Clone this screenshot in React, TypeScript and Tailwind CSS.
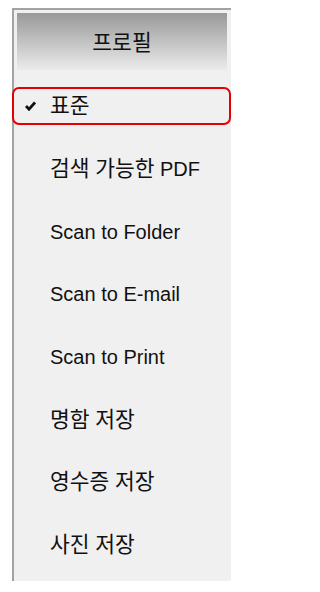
const items = [
  "검색 가능한 PDF",
  "Scan to Folder",
  "Scan to E-mail",
  "Scan to Print",
  "명함 저장",
  "영수증 저장",
  "사진 저장",
];

const font = { fontFamily: '"Liberation Sans", "Noto Sans CJK KR", sans-serif' };

// hangul runs come out a touch small next to the latin, so bump them
function Label({ text }: { text: string }) {
  return (
    <span>
      {text.split(/([가-힣]+)/).map((part, i) =>
        /[가-힣]/.test(part) ? (
          <span key={i} className="text-[21.5px]">{part}</span>
        ) : (
          <span key={i}>{part}</span>
        )
      )}
    </span>
  );
}

export default function App() {
  return (
    <div className="bg-white w-[245px] h-[592px] pt-2 pl-3" style={font}>
      <div className="w-[219px] h-[573px] border-t-2 border-l-2 border-[#a3a3a3] bg-[#f0f0f0] flex flex-col text-[20px] text-[#111]">
        <div className="ml-[3px] mr-[4px] mt-[3px] h-[57px] bg-gradient-to-b from-[#999999] to-[#ececec] flex items-center justify-center pt-1">
          <Label text="프로필" />
        </div>

        <div className="flex flex-col pt-[5px]">
          <div className="h-[62.7px] flex items-center">
            <div className="-ml-[2px] w-[219px] h-[38px] border-2 border-[#e60000] rounded-[7px] flex items-center pl-[11px]">
              <svg width="11" height="10" viewBox="0 0 11 10" className="shrink-0">
                <path d="M1 5 L4 8.2 L10 1.4" fill="none" stroke="#111" strokeWidth="2.8" />
              </svg>
              <span className="ml-[14px]">
                <Label text="표준" />
              </span>
            </div>
          </div>
          {items.map((label) => (
            <div key={label} className="h-[62.7px] flex items-center pl-[36px]">
              <Label text={label} />
            </div>
          ))}
        </div>
      </div>
    </div>
  );
}
